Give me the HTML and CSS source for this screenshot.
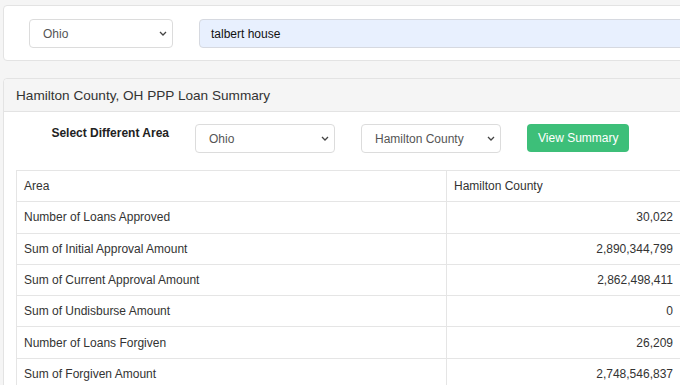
FILE: index.html
```
<!DOCTYPE html>
<html>
<head>
<meta charset="utf-8">
<link rel="stylesheet" href="styles.css">
</head>
<body>
<div class="page">
  <div class="card search-card">
    <div class="select sel-state">
      <span>Ohio</span>
      <svg class="chev" width="8" height="5" viewBox="0 0 8 5"><path d="M1 1l3 3 3-3" fill="none" stroke="#444" stroke-width="1.3"/></svg>
    </div>
    <div class="search-input">talbert house</div>
  </div>

  <div class="card summary-card">
    <div class="card-header">Hamilton County, OH PPP Loan Summary</div>
    <div class="card-body">
      <div class="filter-row">
        <div class="filter-label">Select Different Area</div>
        <div class="select sel-area">
          <span>Ohio</span>
          <svg class="chev" width="8" height="5" viewBox="0 0 8 5"><path d="M1 1l3 3 3-3" fill="none" stroke="#444" stroke-width="1.3"/></svg>
        </div>
        <div class="select sel-area">
          <span>Hamilton County</span>
          <svg class="chev" width="8" height="5" viewBox="0 0 8 5"><path d="M1 1l3 3 3-3" fill="none" stroke="#444" stroke-width="1.3"/></svg>
        </div>
        <div class="btn-view">View Summary</div>
      </div>
      <table class="summary-table">
        <tr><td class="c-label">Area</td><td class="c-head">Hamilton County</td></tr>
        <tr><td class="c-label">Number of Loans Approved</td><td class="c-num">30,022</td></tr>
        <tr><td class="c-label">Sum of Initial Approval Amount</td><td class="c-num">2,890,344,799</td></tr>
        <tr><td class="c-label">Sum of Current Approval Amount</td><td class="c-num">2,862,498,411</td></tr>
        <tr><td class="c-label">Sum of Undisburse Amount</td><td class="c-num">0</td></tr>
        <tr><td class="c-label">Number of Loans Forgiven</td><td class="c-num">26,209</td></tr>
        <tr><td class="c-label">Sum of Forgiven Amount</td><td class="c-num">2,748,546,837</td></tr>
      </table>
    </div>
  </div>
</div>
</body>
</html>
```
FILE: styles.css
```
html, body {
  margin: 0;
  padding: 0;
  background: #f5f5f5;
  overflow: hidden;
  font-family: "Liberation Sans", Arial, sans-serif;
  color: #333;
}
.page {
  padding: 5px 0 0 3px;
  width: 700px;
}
.card {
  background: #fff;
  border: 1px solid #e3e3e3;
  border-radius: 4px;
}
.search-card {
  display: flex;
  align-items: center;
  gap: 26px;
  padding: 13px 0 12px 25px;
}
.select {
  box-sizing: border-box;
  height: 29px;
  border: 1px solid #dcdcdc;
  border-radius: 4px;
  background: #fff;
  display: flex;
  align-items: center;
  justify-content: space-between;
  padding: 0 5px 0 13px;
  font-size: 12px;
  color: #555;
}
.sel-state {
  width: 144px;
}
.search-input {
  box-sizing: border-box;
  flex: 1;
  height: 29px;
  border: 1px solid #d6d9e0;
  border-radius: 4px;
  background: #e8f0fe;
  display: flex;
  align-items: center;
  padding: 0 11px;
  font-size: 12px;
  color: #111;
}
.summary-card {
  margin-top: 17px;
}
.card-header {
  background: #f5f5f5;
  border-bottom: 1px solid #e3e3e3;
  height: 32px;
  padding: 0 12px;
  display: flex;
  align-items: center;
  font-size: 13.6px;
  color: #333;
  border-radius: 4px 4px 0 0;
}
.card-body {
  padding: 12px 0 0 12px;
}
.filter-row {
  display: flex;
  align-items: flex-start;
  gap: 26px;
  margin-bottom: 17px;
}
.filter-label {
  width: 153px;
  text-align: right;
  padding-top: 2px;
  font-weight: bold;
  font-size: 12px;
  color: #222;
}
.sel-area {
  width: 140px;
}
.btn-view {
  box-sizing: border-box;
  height: 28px;
  padding: 0 11px;
  background: #3dbf79;
  border-radius: 4px;
  color: #fff;
  font-size: 12px;
  display: flex;
  align-items: center;
}
.summary-table {
  border-collapse: collapse;
  width: 665px;
  font-size: 12px;
  color: #333;
}
.summary-table td {
  border: 1px solid #e5e5e5;
  height: 30.3px;
  padding: 0 7px;
}
.c-label {
  width: 415px;
}
.c-head {
  text-align: left;
}
.c-num {
  text-align: right;
}
```
